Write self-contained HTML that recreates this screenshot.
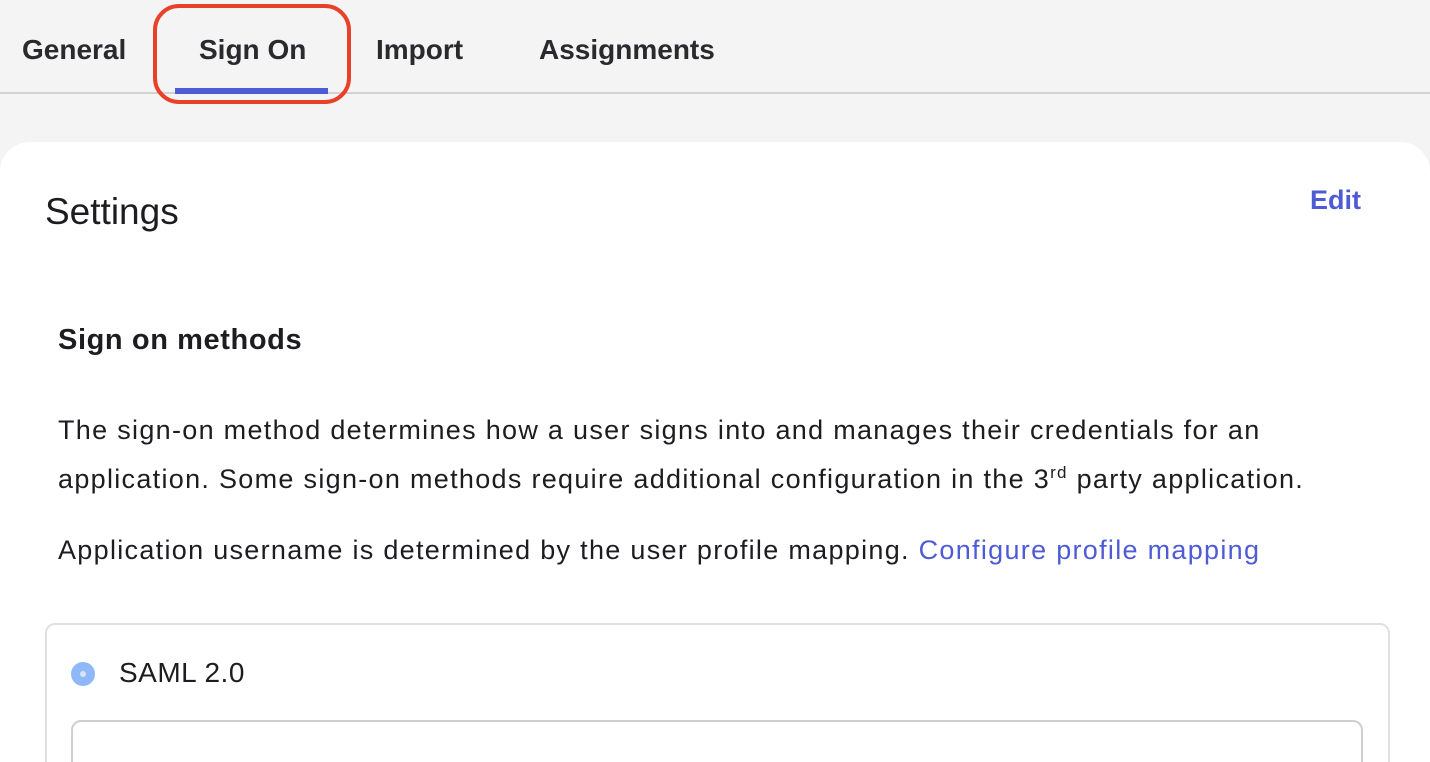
<!DOCTYPE html>
<html style="width:1430px;height:762px;overflow:hidden"><head><style>
body{margin:0;width:1430px;height:762px;overflow:hidden;background:#f4f4f4;font-family:"Liberation Sans",sans-serif;color:#1d1d21;position:relative}
.t{position:absolute;font-size:28px;font-weight:bold;top:34px;color:#2a2a2e}
.line{position:absolute;left:0;right:0;top:92px;height:2px;background:#d2d2d4}
.ul{position:absolute;left:175px;top:88px;width:153px;height:6px;background:#4f5bd5}
.ring{position:absolute;left:153px;top:4px;width:190px;height:92px;border:4px solid #e8412a;border-radius:26px}
.card{position:absolute;left:0;top:142px;width:1430px;height:620px;background:#fff;border-radius:30px 30px 0 0;overflow:hidden}
.a{position:absolute;white-space:nowrap}
.p{font-size:27px;color:#1d1d21;letter-spacing:1.3px}
.link{color:#4f5bd5}
</style></head><body>
<div class="t" style="left:22px">General</div>
<div class="t" style="left:199px">Sign On</div>
<div class="t" style="left:376px">Import</div>
<div class="t" style="left:539px">Assignments</div>
<div class="line"></div>
<div class="ul"></div>
<div class="ring"></div>
<div class="card">
<div style="position:absolute;left:45px;top:481px;width:1341px;height:200px;border:2px solid #e0e0e0;border-radius:10px"></div>
<div style="position:absolute;left:71px;top:578px;width:1288px;height:100px;border:2px solid #cfcfcf;border-radius:10px"></div>
</div>
<div class="a" style="left:45px;top:191px;font-size:37px;color:#1d1d21">Settings</div>
<div class="a" style="left:1310px;top:185px;font-size:27px;font-weight:bold;color:#4f5bd5">Edit</div>
<div class="a" style="left:58px;top:324px;font-size:29px;font-weight:bold;color:#1d1d21;letter-spacing:0.6px">Sign on methods</div>
<div class="a p" style="left:58px;top:415px">The sign-on method determines how a user signs into and manages their credentials for an</div>
<div class="a p" style="left:58px;top:463px">application. Some sign-on methods require additional configuration in the 3<sup style="font-size:17px">rd</sup> party application.</div>
<div class="a p" style="left:58px;top:535px">Application username is determined by the user profile mapping. <span class="link">Configure profile mapping</span></div>
<div style="position:absolute;left:71px;top:662px;width:24px;height:24px;border-radius:50%;background:#8fb8f8"></div>
<div style="position:absolute;left:80px;top:671px;width:6px;height:6px;border-radius:50%;background:#d4e4fc"></div>
<div class="a" style="left:119px;top:657px;font-size:28px;letter-spacing:0.5px">SAML 2.0</div>
</body></html>
